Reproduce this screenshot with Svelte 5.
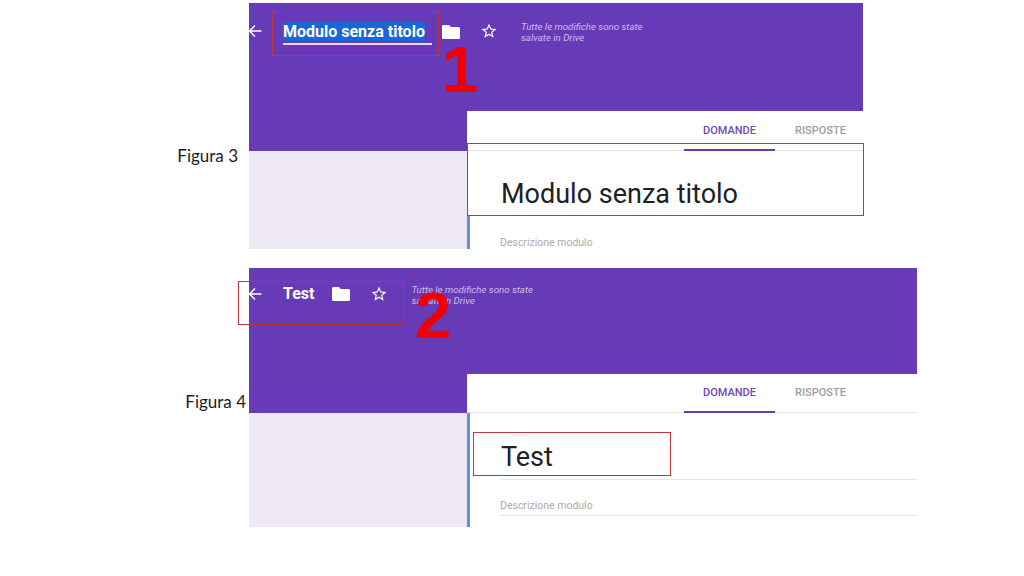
<script>
  const figures = [
    { id: 'one', caption: 'Figura 3', name: 'Modulo senza titolo', selected: true },
    { id: 'two', caption: 'Figura 4', name: 'Test', selected: false }
  ];
</script>

<style>
  :global(body) {
    margin: 0;
    background: #fff;
  }

  .slide {
    position: relative;
    width: 1024px;
    height: 576px;
    overflow: hidden;
    padding-top: 3px;
    box-sizing: border-box;
    display: flex;
    flex-direction: column;
    gap: 19px;
    font-family: Roboto, sans-serif;
  }

  .row {
    display: flex;
    align-items: flex-start;
  }

  .caption {
    width: 249px;
    box-sizing: border-box;
    text-align: right;
    font-family: Lato, "Open Sans", sans-serif;
    font-size: 17px;
    line-height: 20px;
    color: #1c1c1c;
  }
  .one .caption {
    padding: 143px 11px 0 0;
  }
  .two .caption {
    padding: 124px 3px 0 0;
  }

  .form {
    display: grid;
    grid-template-columns: 218px 1fr;
    background: #fff;
  }
  .one .form {
    width: 614px;
    grid-template-rows: 108px 138px;
  }
  .two .form {
    width: 668px;
    grid-template-rows: 106px 153px;
  }

  .header {
    grid-column: 1 / 3;
    background: #673ab7;
    display: flex;
    align-items: flex-start;
    color: #fff;
  }
  .one .header {
    padding-top: 20px;
  }
  .two .header {
    padding-top: 17px;
  }

  .back {
    width: 14px;
    height: 14px;
    margin-top: 1px;
    margin-left: -1px;
  }
  .two .back {
    margin-top: 2px;
  }

  .name {
    margin-left: 21px;
    font-size: 16px;
    font-weight: 700;
    line-height: 18px;
  }
  .one .name {
    width: 149px;
    padding-bottom: 2px;
    border-bottom: 2px solid #e2d8f3;
  }
  .name mark {
    background: #1a66d9;
    color: #fff;
  }

  .folder {
    width: 18px;
    height: 14px;
    margin-top: 2px;
  }
  .one .folder {
    margin-left: 10px;
  }
  .two .folder {
    margin-left: 18px;
  }

  .star {
    width: 18px;
    height: 18px;
    margin-left: 20px;
  }
  .one .star {
    margin-top: -1px;
  }

  .saved {
    margin: -2px 0 0 23px;
    width: 134px;
    font-size: 9.7px;
    font-style: italic;
    line-height: 11px;
    color: #cdbde8;
  }
  .two .saved {
    margin-top: -1px;
  }

  .side {
    display: flex;
    flex-direction: column;
  }
  .side .band {
    background: #673ab7;
  }
  .one .side .band {
    height: 40px;
  }
  .two .side .band {
    height: 39px;
  }
  .side .rest {
    flex: 1;
    background: #ede7f6;
  }

  .panel {
    display: flex;
    flex-direction: column;
    min-height: 0;
    background: #fff;
  }

  .tabs {
    flex: none;
    display: flex;
    justify-content: flex-start;
    padding-left: 217px;
    border-bottom: 1px solid #e4e4e4;
    font-size: 11px;
    font-weight: 500;
  }
  .one .tabs {
    height: 39px;
  }
  .two .tabs {
    height: 38px;
  }

  .tab {
    width: 91px;
    display: flex;
    align-items: center;
    justify-content: center;
    box-sizing: border-box;
    color: #9e9e9e;
    margin-bottom: -1px;
    border-bottom: 2px solid transparent;
  }
  .tab.active {
    color: #6f48b8;
    border-bottom-color: #673ab7;
  }
  .tab + .tab {
    width: 51px;
    margin-left: 20px;
  }

  .body {
    flex: 1;
    min-height: 0;
    padding-left: 31px;
  }
  .two .body {
    border-left: 3px solid #5b8fe8;
  }
  .one .body {
    border-left: 3px solid transparent;
    background: linear-gradient(#5b8fe8, #5b8fe8) left bottom / 3px 33px no-repeat;
    background-origin: border-box;
    background-clip: border-box;
  }

  .title {
    font-size: 27px;
    line-height: 32px;
    color: #202124;
  }
  .one .title {
    padding-top: 27px;
  }
  .two .title {
    padding: 28px 0 6px;
    border-bottom: 1px solid #e4e4e4;
  }

  .desc {
    margin-left: -1px;
    font-size: 10.5px;
    line-height: 14px;
    color: #ababab;
  }
  .one .desc {
    margin-top: 26px;
  }
  .two .desc {
    margin-top: 19px;
    padding-bottom: 2px;
    border-bottom: 1px solid #e4e4e4;
  }

  /* annotations laid over the screenshots */
  .mark-box {
    position: absolute;
    box-sizing: border-box;
    border: 1px solid #c0343c;
  }
  .box-a {
    left: 272px;
    top: 11px;
    width: 167px;
    height: 45px;
  }
  .box-b {
    left: 467px;
    top: 143px;
    width: 397px;
    height: 73px;
  }
  .box-c {
    left: 238px;
    top: 281px;
    width: 166px;
    height: 44px;
  }
  .box-d {
    left: 473px;
    top: 432px;
    width: 198px;
    height: 44px;
  }

  .number {
    position: absolute;
    font-family: "Liberation Sans", sans-serif;
    font-weight: 700;
    font-size: 65px;
    line-height: 65px;
    color: #f00000;
  }
  .n1 {
    left: 442px;
    top: 37px;
  }
  .n2 {
    left: 415px;
    top: 283px;
  }
</style>

<div class="slide">
  {#each figures as fig}
    <div class="row {fig.id}">
      <div class="caption">{fig.caption}</div>
      <div class="form">
        <div class="header">
          <svg class="back" viewBox="0 0 14 14" fill="none" stroke="#fff" stroke-width="1.5">
            <path d="M13.5 7H1.5M7 1.5L1.5 7L7 12.5" />
          </svg>
          <div class="name">
            {#if fig.selected}<mark>{fig.name}</mark>{:else}{fig.name}{/if}
          </div>
          <svg class="folder" viewBox="0 0 18 14" fill="#fff">
            <path d="M1.6 0H7l1.8 2h7.6c.9 0 1.6.7 1.6 1.6v8.8c0 .9-.7 1.6-1.6 1.6H1.6C.7 14 0 13.3 0 12.4V1.6C0 .7.7 0 1.6 0z" />
          </svg>
          <svg class="star" viewBox="0 0 24 24" fill="#fff">
            <path d="M22 9.24l-7.19-.62L12 2 9.19 8.63 2 9.24l5.46 4.73L5.82 21 12 17.27 18.18 21l-1.63-7.03L22 9.24zM12 15.4l-3.76 2.27 1-4.28-3.32-2.88 4.38-.38L12 6.1l1.71 4.04 4.38.38-3.32 2.88 1 4.28L12 15.4z" />
          </svg>
          <div class="saved">Tutte le modifiche sono state salvate in Drive</div>
        </div>
        <div class="side">
          <div class="band"></div>
          <div class="rest"></div>
        </div>
        <div class="panel">
          <div class="tabs">
            <div class="tab active">DOMANDE</div>
            <div class="tab">RISPOSTE</div>
          </div>
          <div class="body">
            <div class="title">{fig.name}</div>
            <div class="desc">Descrizione modulo</div>
          </div>
        </div>
      </div>
    </div>
  {/each}

  <div class="mark-box box-a"></div>
  <div class="mark-box box-b"></div>
  <div class="mark-box box-c"></div>
  <div class="mark-box box-d"></div>
  <div class="number n1">1</div>
  <div class="number n2">2</div>
</div>
